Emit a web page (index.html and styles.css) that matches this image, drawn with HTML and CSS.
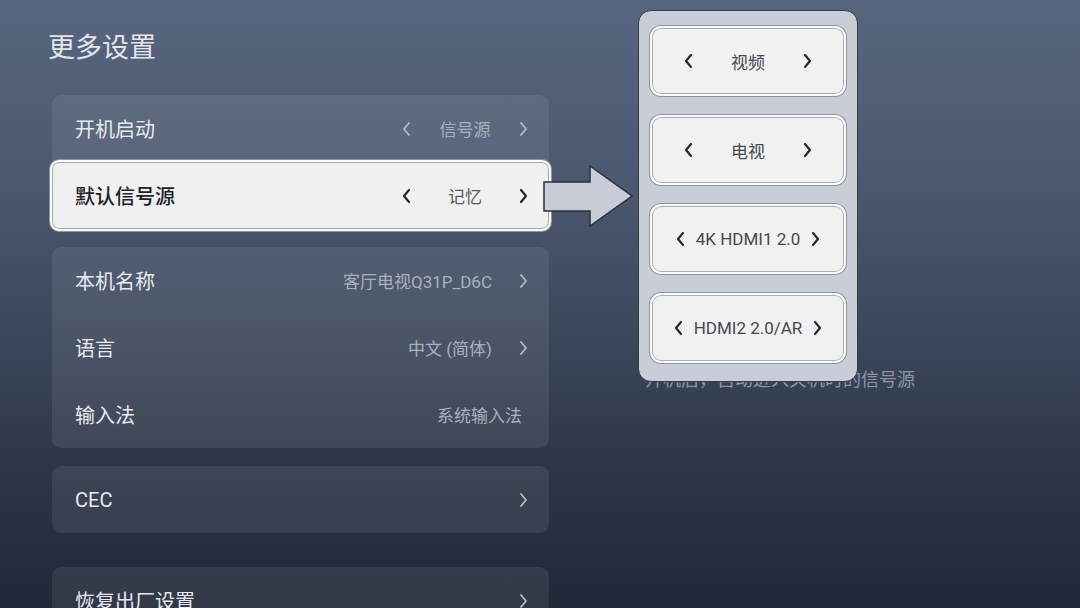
FILE: index.html
```html
<!DOCTYPE html>
<html lang="zh-CN">
<head>
<meta charset="utf-8">
<title>更多设置</title>
<link rel="stylesheet" href="styles.css">
</head>
<body>
<div class="screen">
  <main class="settings">
    <h1 class="title">更多设置</h1>
    <section class="group">
      <div class="row">
        <span class="label">开机启动</span>
        <span class="selector">
          <svg class="chev" viewBox="0 0 10 16"><polyline points="7,2 2,8 7,14"/></svg>
          <span class="sel-value">信号源</span>
          <svg class="chev" viewBox="0 0 10 16"><polyline points="3,2 8,8 3,14"/></svg>
        </span>
      </div>
      <div class="row row-focus">
        <span class="label">默认信号源</span>
        <span class="selector">
          <svg class="chev" viewBox="0 0 10 16"><polyline points="7,2 2,8 7,14"/></svg>
          <span class="sel-value">记忆</span>
          <svg class="chev" viewBox="0 0 10 16"><polyline points="3,2 8,8 3,14"/></svg>
        </span>
      </div>
    </section>
    <section class="group">
      <div class="row">
        <span class="label">本机名称</span>
        <span class="value">客厅电视Q31P_D6C</span>
        <svg class="chev chev-end" viewBox="0 0 10 16"><polyline points="3,2 8,8 3,14"/></svg>
      </div>
      <div class="row">
        <span class="label">语言</span>
        <span class="value">中文 (简体)</span>
        <svg class="chev chev-end" viewBox="0 0 10 16"><polyline points="3,2 8,8 3,14"/></svg>
      </div>
      <div class="row">
        <span class="label">输入法</span>
        <span class="value value-last">系统输入法</span>
      </div>
    </section>
    <section class="group">
      <div class="row">
        <span class="label label-latin">CEC</span>
        <svg class="chev chev-end" viewBox="0 0 10 16"><polyline points="3,2 8,8 3,14"/></svg>
      </div>
    </section>
    <section class="group group-reset">
      <div class="row">
        <span class="label">恢复出厂设置</span>
        <svg class="chev chev-end" viewBox="0 0 10 16"><polyline points="3,2 8,8 3,14"/></svg>
      </div>
    </section>
  </main>
  <aside class="info">
    <p class="desc">开机后，自动进入关机时的信号源</p>
  </aside>

  <svg class="pointer" viewBox="0 0 92 64">
    <polygon points="1,17 47,17 47,1 89,31 47,61 47,46 1,46"/>
  </svg>

  <div class="popup">
    <div class="opt">
      <svg class="chev" viewBox="0 0 10 16"><polyline points="7,2 2,8 7,14"/></svg>
      <span class="opt-text">视频</span>
      <svg class="chev" viewBox="0 0 10 16"><polyline points="3,2 8,8 3,14"/></svg>
    </div>
    <div class="opt">
      <svg class="chev" viewBox="0 0 10 16"><polyline points="7,2 2,8 7,14"/></svg>
      <span class="opt-text">电视</span>
      <svg class="chev" viewBox="0 0 10 16"><polyline points="3,2 8,8 3,14"/></svg>
    </div>
    <div class="opt">
      <svg class="chev" viewBox="0 0 10 16"><polyline points="7,2 2,8 7,14"/></svg>
      <span class="opt-text">4K HDMI1 2.0</span>
      <svg class="chev" viewBox="0 0 10 16"><polyline points="3,2 8,8 3,14"/></svg>
    </div>
    <div class="opt">
      <svg class="chev" viewBox="0 0 10 16"><polyline points="7,2 2,8 7,14"/></svg>
      <span class="opt-text">HDMI2 2.0/AR</span>
      <svg class="chev" viewBox="0 0 10 16"><polyline points="3,2 8,8 3,14"/></svg>
    </div>
  </div>
</div>
</body>
</html>
```
FILE: styles.css
```css
* { box-sizing: border-box; }
html, body { margin: 0; padding: 0; }
body {
  width: 1080px;
  height: 608px;
  overflow: hidden;
  font-family: Roboto, "Noto Sans CJK SC", sans-serif;
}
.screen {
  position: relative;
  width: 1080px;
  height: 608px;
  display: flex;
  background: linear-gradient(180deg, #57667e 0%, #4c5870 30%, #3b4559 58%, #2b3345 80%, #222838 100%);
  overflow: hidden;
}
.settings {
  width: 549px;
  padding: 29px 0 0 48px;
  display: flex;
  flex-direction: column;
}
.title {
  margin: 0 0 33px 0;
  font-family: "Noto Sans CJK SC", sans-serif;
  font-size: 27px;
  line-height: 33px;
  font-weight: 400;
  color: #e2e6ec;
}
.group {
  margin-left: 4px;
  width: 497px;
  background: rgba(255, 255, 255, 0.08);
  border-radius: 9px;
  margin-bottom: 18px;
  display: flex;
  flex-direction: column;
  flex: none;
}
.group-reset { margin-top: 16px; }
.row {
  height: 67px;
  display: flex;
  align-items: center;
  padding: 0 21px 0 23px;
}
.label {
  font-family: "Noto Sans CJK SC", sans-serif;
  font-size: 20px;
  color: #e6eaf0;
  flex: 1;
}
.label-latin { font-family: Roboto, "Noto Sans CJK SC", sans-serif; }
.value {
  font-family: Roboto, "Noto Sans CJK SC", sans-serif;
  font-size: 17px;
  color: #a9b1be;
  margin-right: 26px;
}
.value-last { margin-right: 6px; }
.chev {
  width: 10px;
  height: 16px;
  flex: none;
  fill: none;
  stroke: #b4bcc8;
  stroke-width: 1.8;
  stroke-linecap: round;
  stroke-linejoin: round;
}
.selector {
  display: flex;
  align-items: center;
  width: 126px;
  justify-content: space-between;
}
.sel-value {
  flex: 1;
  text-align: center;
  font-family: "Noto Sans CJK SC", sans-serif;
  font-size: 17px;
  color: #a9b1be;
}
.row-focus {
  margin: -2px -2px -2px -2px;
  height: 71px;
  padding: 0 21px 0 23px;
  background: #f0f0f1;
  border-radius: 9px;
  border: 2px solid #fbfbfb;
  box-shadow: 0 0 0 1px #8e949e, inset 0 0 0 1px #a3a8b0;
}
.row-focus .label { color: #1e2126; font-weight: 500; }
.row-focus .sel-value { color: #55585e; }
.row-focus .chev { stroke: #25282e; stroke-width: 2.2; }

.info {
  flex: 1;
  padding: 365px 0 0 96px;
}
.desc {
  margin: 0;
  font-family: "Noto Sans CJK SC", sans-serif;
  font-size: 18px;
  line-height: 26px;
  color: #8d96a6;
  white-space: nowrap;
}

.pointer {
  position: absolute;
  left: 543px;
  top: 165px;
  width: 92px;
  height: 64px;
  z-index: 2;
}
.pointer polygon {
  fill: #c8ccd6;
  stroke: #2a303c;
  stroke-width: 1.5;
  stroke-linejoin: miter;
}

.popup {
  position: absolute;
  left: 638px;
  top: 10px;
  width: 220px;
  height: 372px;
  z-index: 3;
  background: #c9cdd6;
  border: 1.5px solid #353b48;
  border-radius: 13px;
  padding: 15px 11px 0 11px;
  display: flex;
  flex-direction: column;
  gap: 19px;
}
.opt {
  height: 70px;
  background: #f1f1f2;
  border-radius: 11px;
  border: 2px solid #fafafa;
  box-shadow: 0 0 0 1px #8e929a, inset 0 0 0 1px #a8acb3;
  display: flex;
  align-items: center;
  justify-content: center;
  gap: 10px;
}
.opt-text {
  min-width: 88px;
  text-align: center;
  font-size: 17px;
  color: #45484e;
}
.opt .chev { stroke: #25282e; stroke-width: 2.2; }
```
